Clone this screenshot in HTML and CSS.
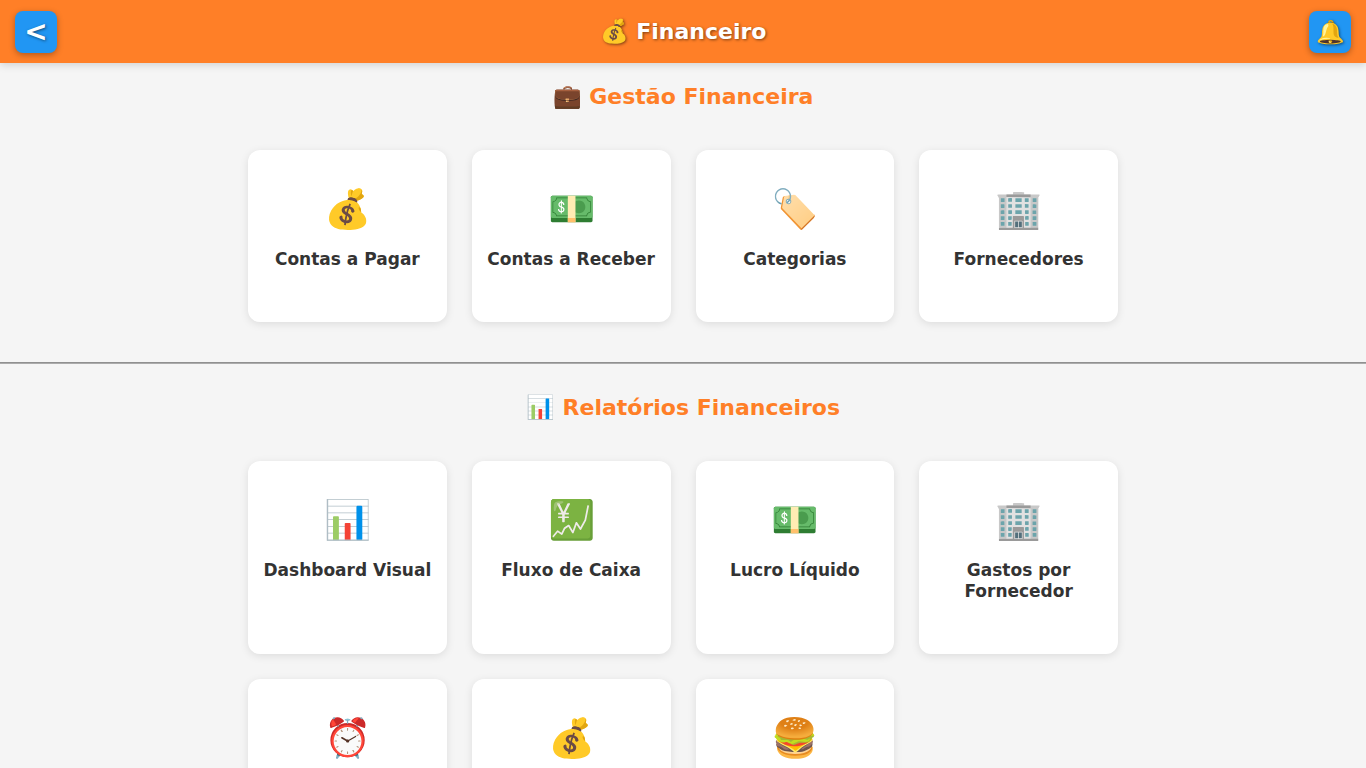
FILE: index.html
```html
<!DOCTYPE html>
<html lang="pt-BR">
<head>
<meta charset="utf-8">
<meta name="viewport" content="width=device-width, initial-scale=1">
<title>Financeiro</title>
<link rel="stylesheet" href="styles.css">
</head>
<body>
<header class="topbar">
  <button class="topbar-btn back" type="button" aria-label="Voltar">&lt;</button>
  <h1 class="topbar-title"><span class="title-icon">💰</span> Financeiro</h1>
  <button class="topbar-btn" type="button" aria-label="Notificações">🔔</button>
</header>
<main>
  <section class="section">
    <h2 class="section-title"><span class="title-icon">💼</span> Gestão Financeira</h2>
    <div class="grid">
      <a class="card" href="#"><span class="icon">💰</span><span class="label">Contas a Pagar</span></a>
      <a class="card" href="#"><span class="icon">💵</span><span class="label">Contas a Receber</span></a>
      <a class="card" href="#"><span class="icon">🏷️</span><span class="label">Categorias</span></a>
      <a class="card" href="#"><span class="icon">🏢</span><span class="label">Fornecedores</span></a>
    </div>
  </section>
  <hr class="divider">
  <section class="section">
    <h2 class="section-title"><span class="title-icon">📊</span> Relatórios Financeiros</h2>
    <div class="grid">
      <a class="card" href="#"><span class="icon">📊</span><span class="label">Dashboard Visual</span></a>
      <a class="card" href="#"><span class="icon">💹</span><span class="label">Fluxo de Caixa</span></a>
      <a class="card" href="#"><span class="icon">💵</span><span class="label">Lucro Líquido</span></a>
      <a class="card" href="#"><span class="icon">🏢</span><span class="label">Gastos por Fornecedor</span></a>
      <a class="card" href="#"><span class="icon">⏰</span></a>
      <a class="card" href="#"><span class="icon">💰</span></a>
      <a class="card" href="#"><span class="icon">🍔</span></a>
    </div>
  </section>
</main>
</body>
</html>
```
FILE: styles.css
```css
* {
  box-sizing: border-box;
}

body {
  margin: 0;
  background: #f5f5f5;
  color: #333;
  font-family: "DejaVu Sans", sans-serif;
}

.topbar {
  display: flex;
  align-items: center;
  justify-content: space-between;
  padding: 11px 15px 10px;
  background: #ff7f27;
  box-shadow: 0 2px 8px rgba(0, 0, 0, 0.15);
}

.topbar-title {
  margin: 0;
  color: #fff;
  font-size: 22px;
  line-height: 26px;
  text-shadow: 1px 1px 3px rgba(0, 0, 0, 0.5);
}

.title-icon {
  font-size: 23px;
  line-height: 22px;
}

.topbar-btn {
  display: flex;
  align-items: center;
  justify-content: center;
  width: 42px;
  height: 42px;
  padding: 0;
  border: 0;
  border-radius: 8px;
  background: #2196f3;
  color: #fff;
  font: bold 23px/26px "DejaVu Sans", sans-serif;
  text-shadow: 1px 1px 3px rgba(0, 0, 0, 0.5);
  box-shadow: 0 2px 6px rgba(0, 0, 0, 0.3);
}

.back {
  font-size: 28px;
  line-height: 28px;
}

.section-title {
  margin: 0 0 40px;
  padding-top: 20px;
  color: #ff7f27;
  font-size: 22px;
  line-height: 27px;
  text-align: center;
}

.grid {
  display: grid;
  grid-template-columns: repeat(4, 1fr);
  gap: 25px;
  max-width: 900px;
  margin: 0 auto;
  padding: 0 15px;
}

.card {
  display: flex;
  flex-direction: column;
  align-items: center;
  min-height: 172px;
  padding: 30px 15px 52px;
  border-radius: 12px;
  background: #fff;
  color: #333;
  text-align: center;
  text-decoration: none;
  box-shadow: 0 2px 8px rgba(0, 0, 0, 0.1);
}

.icon {
  margin-bottom: 10px;
  font-size: 38px;
  line-height: 59px;
}

.label {
  font-size: 17px;
  font-weight: bold;
  line-height: 21px;
}

.divider {
  height: 2px;
  margin: 40px 0 10px;
  border: 0;
  border-top: 1px solid #909090;
  background: #ababab;
}
```
